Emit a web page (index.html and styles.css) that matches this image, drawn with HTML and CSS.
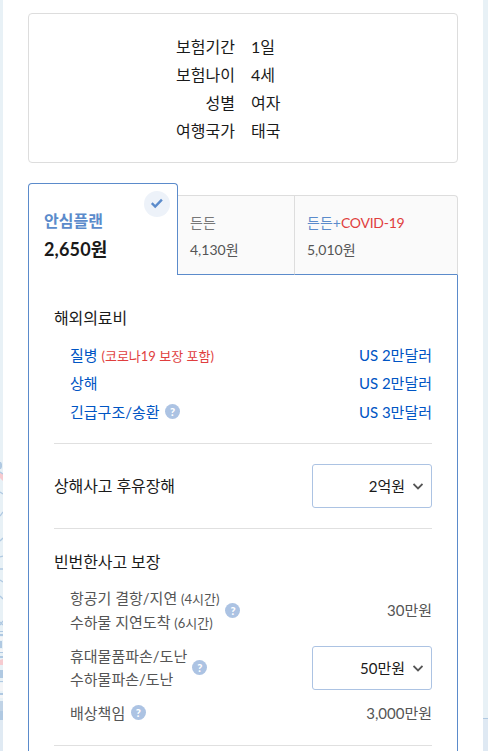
FILE: index.html
```html
<!DOCTYPE html>
<html lang="ko">
<head>
<meta charset="utf-8">
<title>해외여행보험</title>
<link rel="stylesheet" href="styles.css">
</head>
<body>
<svg class="scenery" width="3" height="751" viewBox="0 0 3 751" aria-hidden="true">
  <path fill="#b0c9e2" d="M0 462h1l1 2v3l-1 2h-1zM0 631h3v1H0zM0 634h3v2H0zM0 641h2v7H0zM0 652h3v1H0zM0 656h3v2H0zM0 670h3v8H0zM0 681h3v1H0zM0 693h3v2H0z"/>
  <path fill="#f6cbd0" d="M0 472l3 2v7l-3-3zM0 660l3-1v6H0z"/>
  <path fill="none" stroke="#b0c9e2" stroke-width="1.3" d="M0 472l3 2M0 492l3 2M0 516l3-4M0 541l3-3M0 557l3-1M0 569h3M0 580l3 2M0 596l3 3M0 625l3-4M0 622l3 3"/>
  <path fill="#f4f5f7" d="M0 637h3v3H0zM0 649h3v3H0zM0 683h3v8H0zM0 695h3v3H0z"/>
  <path fill="#c0d3e6" d="M0 701h3v10H0z"/>
  <path fill="#b0c9e2" d="M0 711h3v9H0z"/>
  <path fill="#e0eaf3" d="M0 720h3v31H0z"/>
</svg>
<main class="page">
  <dl class="summary">
    <dt>보험기간</dt><dd>1일</dd>
    <dt>보험나이</dt><dd>4세</dd>
    <dt>성별</dt><dd>여자</dd>
    <dt>여행국가</dt><dd>태국</dd>
  </dl>

  <div class="tabs">
    <div class="tab tab-active">
      <span class="check"><svg width="26" height="26" viewBox="0 0 26 26"><path d="M7.8 12.2l3.4 3.4 6.7-7" fill="none" stroke="#5b8bcb" stroke-width="2.4"/></svg></span>
      <strong class="tab-name">안심플랜</strong>
      <strong class="tab-price">2,650원</strong>
    </div>
    <div class="tab tab-basic">
      <span class="tab-name">든든</span>
      <span class="tab-price">4,130원</span>
    </div>
    <div class="tab tab-covid">
      <span class="tab-name">든든+<em>COVID-19</em></span>
      <span class="tab-price">5,010원</span>
    </div>
  </div>

  <div class="panel">
    <section class="group medical">
      <h2>해외의료비</h2>
      <div class="row"><span>질병 <small class="red">(코로나19 보장 포함)</small></span><span>US 2만달러</span></div>
      <div class="row"><span>상해</span><span>US 2만달러</span></div>
      <div class="row rescue"><span>긴급구조/송환</span><i class="help">?</i><span class="value">US 3만달러</span></div>
    </section>
    <section class="group disability">
      <h2>상해사고 후유장해</h2>
      <div class="select">2억원<svg width="10" height="7" viewBox="0 0 10 7"><path d="M.5 1L5 5.4 9.5 1" fill="none" stroke="#555" stroke-width="1.8"/></svg></div>
    </section>
    <section class="group frequent">
      <h2>빈번한사고 보장</h2>
      <div class="row double"><span>항공기 결항/지연 <small>(4시간)</small><br>수하물 지연도착 <small>(6시간)</small></span><i class="help">?</i><span class="value">30만원</span></div>
      <div class="row double belongings"><span>휴대물품파손/도난<br>수하물파손/도난</span><i class="help">?</i><div class="select value">50만원<svg width="10" height="7" viewBox="0 0 10 7"><path d="M.5 1L5 5.4 9.5 1" fill="none" stroke="#555" stroke-width="1.8"/></svg></div></div>
      <div class="row liability"><span>배상책임</span><i class="help">?</i><span class="value">3,000만원</span></div>
    </section>
  </div>
</main>
<div class="shore"></div>
</body>
</html>
```
FILE: styles.css
```css
* { box-sizing: border-box; }
body {
  margin: 0;
  display: flex;
  height: 751px;
  overflow: hidden;
  background: #e8f1f6;
  color: #1a1a1a;
  font-family: Lato, "Noto Sans CJK KR", sans-serif;
  font-size: 16px;
  line-height: 28px;
  font-weight: 400;
}
h2, dl, dd { margin: 0; font-size: 16px; font-weight: 400; }
h2 { letter-spacing: -0.1px; }
.scenery { flex: 0 0 3px; }
.page {
  flex: 0 0 480px;
  background: #fff;
  padding: 13px 25px 0;
  display: flex;
  flex-direction: column;
}
.shore {
  flex: 1;
  margin-top: 718px;
  border-top: 1px solid #b0c9e2;
  background: #dfe9f3;
}
.summary {
  flex: none;
  height: 150px;
  border: 1px solid #ddd;
  border-radius: 4px;
  padding-top: 19px;
  display: grid;
  grid-template-columns: 206px 1fr;
  grid-auto-rows: 28px;
  column-gap: 16px;
}
.summary dt { text-align: right; }

.tabs {
  flex: none;
  margin-top: 20px;
  height: 92px;
  display: flex;
  align-items: flex-end;
}
.tab {
  position: relative;
  display: flex;
  flex-direction: column;
  white-space: nowrap;
}
.tab-active {
  width: 150px;
  height: 92px;
  padding: 23px 15px 0;
  border: 1px solid #5b8bcb;
  border-bottom: 0;
  border-radius: 4px 4px 0 0;
}
.tab-active .tab-name { color: #5b8bcb; font-size: 16px; font-weight: 700; }
.tab-active .tab-price { font-size: 18px; font-weight: 700; letter-spacing: 0.15px; }
.check {
  position: absolute;
  top: 7px;
  right: 7px;
  width: 26px;
  height: 26px;
  border-radius: 50%;
  background: #edf2f9;
}
.check svg { display: block; }
.tab-basic, .tab-covid {
  height: 80px;
  padding: 13px 12px 0;
  background: #fafafa;
  border-top: 1px solid #ddd;
  border-bottom: 1px solid #5b8bcb;
  font-size: 14px;
  line-height: 27px;
  color: #555;
}
.tab-basic { width: 116px; }
.tab-basic .tab-name { color: #777; }
.tab-covid {
  flex: 1;
  border-left: 1px solid #ddd;
  border-right: 1px solid #ddd;
  border-top-right-radius: 4px;
}
.tab-covid .tab-name { color: #5b8bcb; }
.tab-covid em { font-style: normal; color: #e03e3e; letter-spacing: -0.25px; }

.panel {
  flex: none;
  height: 480px;
  padding: 29px 25px 0;
  border: solid #5b8bcb;
  border-width: 0 1px;
}
.group { border-bottom: 1px solid #e0e0e0; }
.row {
  display: flex;
  align-items: center;
  height: 28px;
  padding-left: 16px;
  font-size: 15px;
  color: #555;
}
.row small { font-size: 13px; }
.medical { height: 140px; }
.medical h2 { margin-bottom: 9px; }
.medical .row { color: #0055c4; justify-content: space-between; }
.medical .rescue { margin-top: 1px; justify-content: flex-start; }
.row .red { color: #e03e3e; }
.row .value { margin-left: auto; }
.help {
  width: 15px;
  height: 15px;
  margin: 0 0 2px 6px;
  border-radius: 50%;
  background: #acc3e3;
  color: #fff;
  font-size: 11px;
  font-style: normal;
  font-weight: 900;
  line-height: 15px;
  text-align: center;
}
.disability {
  height: 85px;
  display: flex;
  align-items: center;
  justify-content: space-between;
}
.select {
  width: 120px;
  height: 44px;
  display: flex;
  align-items: center;
  justify-content: flex-end;
  gap: 8px;
  padding-right: 8px;
  border: 1px solid #acc3e3;
  border-radius: 3px;
  color: #1a1a1a;
  font-size: 15px;
}
.rescue .help, .liability .help { margin-left: 5.5px; }
.frequent { height: 217px; padding-top: 19px; }
.frequent h2 { margin-bottom: 12px; }
.double { height: 46px; line-height: 23px; margin-bottom: 11px; }
.double .value { position: relative; top: -1px; }
.double .select { top: 0; }
.belongings .help { margin: 0 0 1px 5px; }
.liability { margin-top: -3px; }
```
